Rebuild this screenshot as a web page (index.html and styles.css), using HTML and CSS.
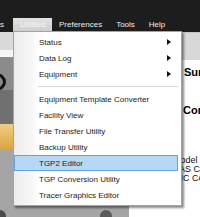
FILE: index.html
```html
<!DOCTYPE html>
<html>
<head>
<meta charset="utf-8">
<link rel="stylesheet" href="styles.css">
</head>
<body>
<div class="menubar">
  <span class="mb-item mb-cut"><span>Reports</span></span>
  <span class="mb-item active">Utilities</span>
  <span class="mb-item">Preferences</span>
  <span class="mb-item">Tools</span>
  <span class="mb-item">Help</span>
</div>
<div class="page">
  <aside class="sidebar">
    <div class="sb-light"></div>
    <div class="sb-white"></div>
    <div class="sb-gray"><div class="ring"></div></div>
    <div class="sb-dark"></div>
    <div class="sb-orange"></div>
    <div class="sb-rest"><span class="dot"></span><span class="dot dot2"></span></div>
  </aside>
  <main class="content">
    <div class="toolbar"></div>
    <h2 class="heading h-sum">Survey</h2>
    <h2 class="heading h-con">Controller</h2>
    <div class="info">
      <div>Model</div>
      <div>BAS Controller</div>
      <div>MIC Controller</div>
    </div>
  </main>
</div>
<div class="dropdown">
  <div class="item sub">Status<span class="arrow"></span></div>
  <div class="item sub">Data Log<span class="arrow"></span></div>
  <div class="item sub">Equipment<span class="arrow"></span></div>
  <div class="sep"></div>
  <div class="item">Equipment Template Converter</div>
  <div class="item">Facility View</div>
  <div class="item">File Transfer Utility</div>
  <div class="item">Backup Utility</div>
  <div class="item hover">TGP2 Editor</div>
  <div class="item">TGP Conversion Utility</div>
  <div class="item">Tracer Graphics Editor</div>
</div>
</body>
</html>
```
FILE: styles.css
```css
* { box-sizing: border-box; }
html, body { margin: 0; padding: 0; }
body {
  width: 200px;
  height: 217px;
  overflow: hidden;
  background: #fff;
  font-family: "Liberation Sans", Arial, sans-serif;
  font-size: 8px;
  position: relative;
}

.menubar {
  height: 32px;
  background: #1d1d1d;
  display: flex;
  align-items: flex-end;
}
.mb-item {
  flex: none;
  height: 14px;
  line-height: 13px;
  padding: 0 7px;
  color: #ececec;
  white-space: nowrap;
}
.mb-cut {
  width: 13px;
  padding: 0 9px 0 0;
  overflow: hidden;
  display: flex;
  justify-content: flex-end;
}
.mb-item.active {
  width: 39px;
  padding: 0 0 0 7px;
  background: linear-gradient(#e2e2e2, #cdcdcd);
  color: #f6f6f6;
}

.page {
  display: flex;
  height: 185px;
  overflow: hidden;
}
.sidebar {
  flex: none;
  width: 129px;
  display: flex;
  flex-direction: column;
  background: #a6a6a6;
}
.sb-light { height: 18px; background: #dadada; }
.sb-white { height: 7px; background: #f6f6f6; }
.sb-gray { height: 33px; background: #8b8b8b; padding-top: 16px; }
.ring {
  width: 20px;
  height: 18px;
  margin-left: -14px;
  border: 3px solid #111;
  border-radius: 50%;
}
.sb-dark { height: 34px; background: #707070; }
.sb-orange { height: 26px; background: linear-gradient(#efcd83, #dba43c); }
.sb-rest {
  flex: 1;
  background: #a5a5a5;
  display: flex;
  align-items: flex-end;
}
.dot {
  flex: none;
  width: 12px;
  height: 12px;
  border-radius: 50%;
  background: #4a4a4a;
  margin: 0 0 -5px -6px;
}
.dot2 { margin-left: 94px; background: #5a5a5a; }

.content {
  flex: 1;
  min-width: 0;
  overflow: hidden;
  padding-left: 55px;
}
.content .toolbar {
  height: 28px;
  margin-left: -55px;
  background: #d8d8d8;
  border-top: 1px solid #c4c4c4;
}
.heading {
  margin: 0;
  font-size: 11px;
  font-weight: bold;
  color: #000;
  white-space: nowrap;
  line-height: 14px;
}
.h-sum { margin-top: 5px; }
.h-con { margin-top: 24px; }
.h-con { margin-left: -1px; }
.info {
  margin: 39px 0 0 -11px;
  font-size: 9px;
  line-height: 9px;
  white-space: nowrap;
  color: #111;
}

.dropdown {
  position: absolute;
  left: 13px;
  top: 31px;
  width: 169px;
  padding: 2px 0;
  border: 1px solid #a3a3a3;
  background: linear-gradient(90deg, #ececec, #f8f8f8 20px, #fff 24px);
  box-shadow: 2px 2px 2px rgba(0, 0, 0, 0.45);
}
.item {
  height: 16px;
  line-height: 15px;
  margin-right: 3px;
  padding-left: 24px;
  border: 1px solid transparent;
  color: #1b1b1b;
  white-space: nowrap;
  display: flex;
  align-items: center;
}
.item.hover {
  background: #b7d8f4;
  border-color: #62a3e1;
}
.arrow {
  margin-left: auto;
  margin-right: 6px;
  width: 0;
  height: 0;
  border-left: 4px solid #111;
  border-top: 3.5px solid transparent;
  border-bottom: 3.5px solid transparent;
}
.sep {
  height: 9px;
  margin: 0 3px 0 24px;
  display: flex;
  align-items: center;
}
.sep::before {
  content: "";
  flex: 1;
  height: 1px;
  background: #d7d7d7;
}
```
